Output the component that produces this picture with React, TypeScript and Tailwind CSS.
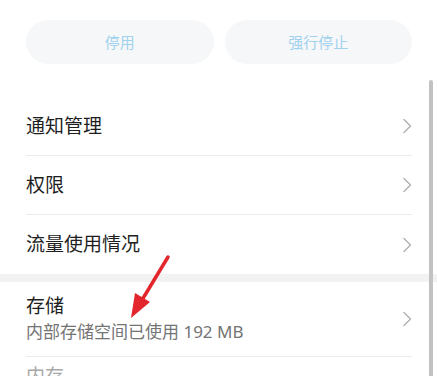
const rows = [
  { title: "通知管理" },
  { title: "权限" },
  { title: "流量使用情况" },
];

const Chevron = () => (
  <svg width="10" height="16" viewBox="0 0 10 16" fill="none" className="shrink-0">
    <path d="M2 1.5 L8.5 8 L2 14.5" stroke="#b0b0b0" strokeWidth="1.4" strokeLinecap="round" strokeLinejoin="round" />
  </svg>
);

const App = () => {
  return (
    <div
      className="relative w-[437px] h-[376px] overflow-hidden bg-white"
      style={{ fontFamily: '"Noto Sans", "Noto Sans CJK SC", sans-serif' }}
    >
      {/* buttons */}
      <div className="flex gap-[11px] pt-5 pl-[26px] pr-[25px]">
        <button className="flex-1 h-[44px] rounded-full bg-[#f6f7f8] text-[15px] text-[#9fd2ee]">停用</button>
        <button className="flex-1 h-[44px] rounded-full bg-[#f6f7f8] text-[15px] text-[#9fd2ee]">强行停止</button>
      </div>

      <div className="mt-[33px]">
        <div className="pl-[26px] pr-[25px]">
          {rows.map((row, i) => (
            <div
              key={row.title}
              className={`flex items-center justify-between h-[59px] ${i < rows.length - 1 ? "border-b border-[#ebebeb]" : ""}`}
            >
              <span className="text-[19px] text-[#1e1e1e]">{row.title}</span>
              <Chevron />
            </div>
          ))}
        </div>

        {/* section gap */}
        <div className="h-2 bg-[#f2f2f2]" />

        <div className="pl-[26px] pr-[25px]">
          <div className="flex items-center justify-between h-[75px] border-b border-[#ebebeb]">
            <div className="flex flex-col">
              <span className="text-[19px] leading-[26px] text-[#1e1e1e]">存储</span>
              <span className="text-[17px] leading-[26px] text-[#747474]">内部存储空间已使用 192 MB</span>
            </div>
            <Chevron />
          </div>
          <div className="flex items-center h-[59px]">
            <span className="text-[19px] text-[#a8a8a8] -mt-[20px]">内存</span>
          </div>
        </div>
      </div>

      {/* scrollbar */}
      <div className="absolute left-[429px] top-[80px] w-[4px] h-[320px] rounded-full bg-[#c2c2c2]" />

      {/* red annotation arrow */}
      <svg className="absolute left-0 top-0 pointer-events-none" width="437" height="376">
        <line x1="168" y1="257" x2="142" y2="300" stroke="#e3262c" strokeWidth="3.5" strokeLinecap="round" />
        <polygon points="131,318 135,293 150,302" fill="#e3262c" />
      </svg>
    </div>
  );
};

export default App;
